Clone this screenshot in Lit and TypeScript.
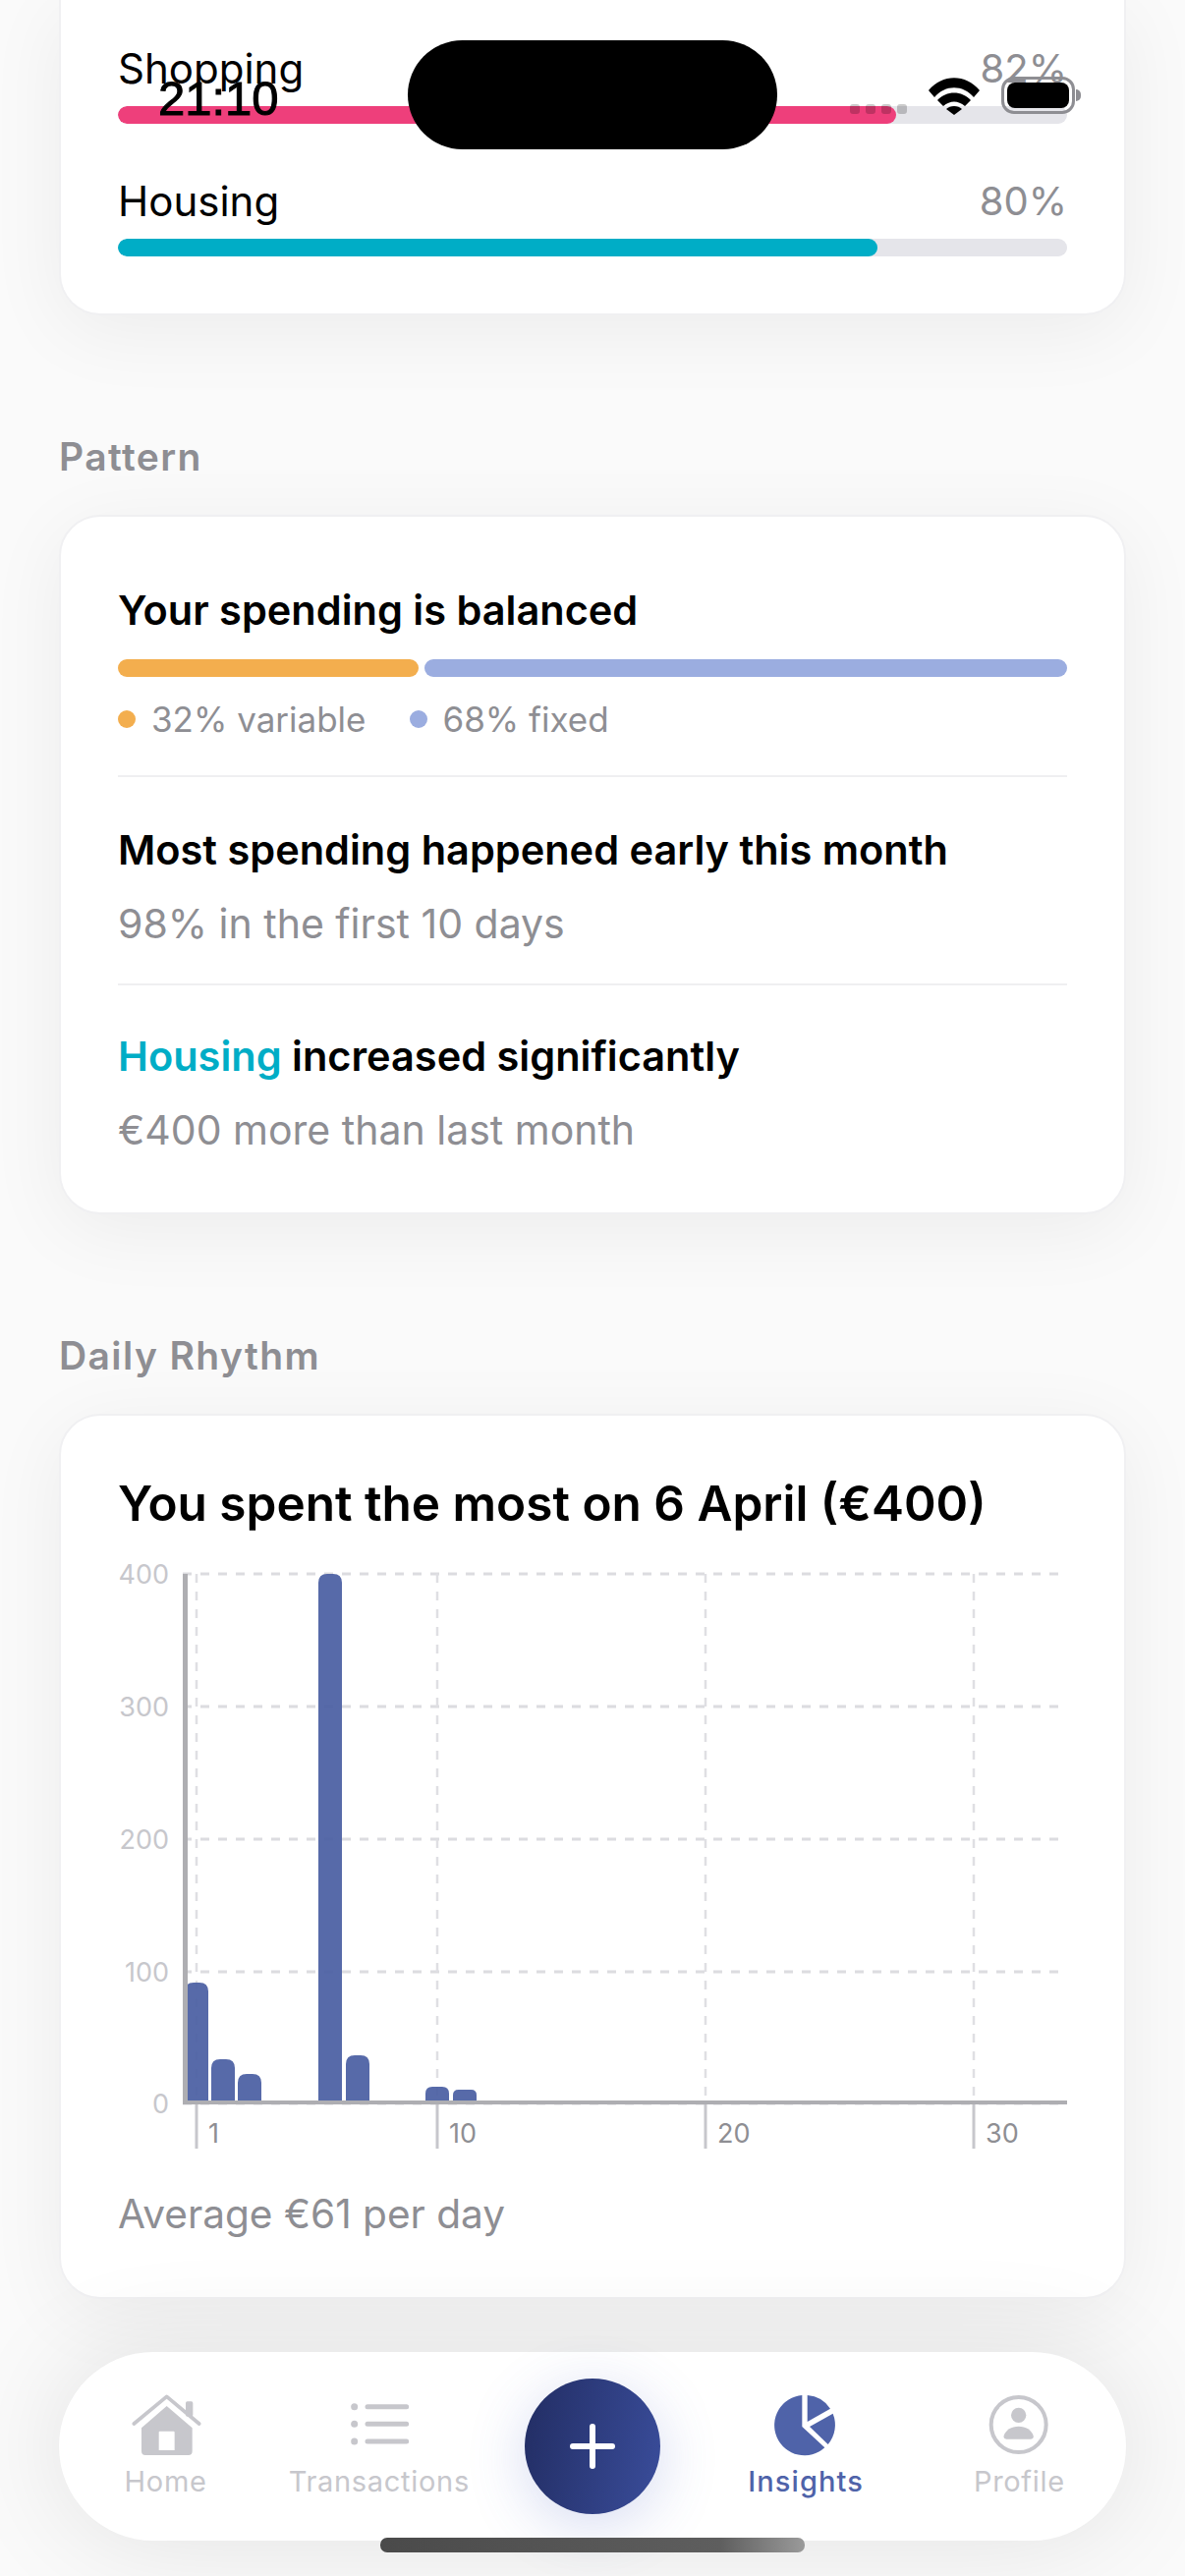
import { LitElement, html, css, svg } from "lit";
import { customElement } from "lit/decorators.js";

const X0 = 186, X1 = 1086, Y0 = 1602, Y1 = 2141;
const ticks = [{ x: 200, t: "1" }, { x: 445, t: "10" }, { x: 718, t: "20" }, { x: 991, t: "30" }];
const yLabels = [{ y: 1602, t: "400" }, { y: 1737, t: "300" }, { y: 1872, t: "200" }, { y: 2007, t: "100" }, { y: 2141, t: "0" }];
const bars = [
  { x: 188, top: 2018 }, { x: 215, top: 2096 }, { x: 242, top: 2111 }, { x: 324, top: 1602 },
  { x: 352, top: 2092 }, { x: 433, top: 2124 }, { x: 461, top: 2127 },
];
const BASE = 2138;

function barPath(x: number, top: number) {
  const w = 24, r = Math.min(9, (BASE - top) / 2);
  return `M${x} ${BASE}V${top + r}Q${x} ${top} ${x + r} ${top}H${x + w - r}Q${x + w} ${top} ${x + w} ${top + r}V${BASE}Z`;
}

@customElement("app-root")
export class AppRoot extends LitElement {
  static styles = css`
    :host { display: block; position: relative; height: 2622px; overflow: hidden; background: #fafafa; font-family: Inter, "Noto Sans", sans-serif; color: #000; }
    .page { padding: 0 60px; display: flex; flex-direction: column; }
    .card { background: #fff; border: 2px solid #f0f0f2; border-radius: 42px; padding: 0 58px; box-shadow: 0 16px 80px rgba(0,0,0,.06); }
    .first { border-top: 0; border-radius: 0 0 42px 42px; padding-top: 45px; padding-bottom: 58px; }
    .row { display: flex; justify-content: space-between; font-size: 42px; line-height: 50px; }
    .pct { color: #8e8e93; font-size: 40px; }
    .track { height: 18px; margin-top: 13px; background: #e5e5ea; border-radius: 9px; overflow: hidden; }
    .fill { height: 100%; border-radius: 9px; }
    .gap { height: 54px; }
    .label { margin: 119px 0 34px; font-size: 39px; line-height: 50px; font-weight: 600; color: #8e8e93; letter-spacing: 1.4px; }
    .pattern { padding-top: 70px; padding-bottom: 59px; }
    .title { font-size: 41.5px; line-height: 50px; font-weight: 600; }
    .split { display: flex; gap: 6px; margin-top: 25px; }
    .seg { height: 18px; border-radius: 9px; }
    .legend { display: flex; gap: 44px; margin-top: 23px; font-size: 35px; line-height: 40px; color: #8e8e93; }
    .leg { display: flex; align-items: center; gap: 16px; }
    .dot { width: 18px; height: 18px; border-radius: 50%; }
    .div { height: 2px; background: #efeff1; }
    .d1 { margin-top: 37px; }
    .d2 { margin-top: 36px; }
    .t2 { margin-top: 49px; }
    .t3 { margin-top: 47px; }
    .sub { font-size: 41px; line-height: 50px; color: #8e8e93; margin-top: 25px; }
    .teal { color: #00adc6; }
    .rhythm { padding-top: 59px; padding-bottom: 59px; }
    .big { font-size: 49.5px; line-height: 60px; font-weight: 600; }
    .chart { display: block; width: 966px; height: 600px; margin-top: 30px; }
    .avg { font-size: 40.6px; line-height: 50px; color: #8e8e93; margin-top: 39px; }
    .ylab { font-size: 27px; fill: #c7c7cc; font-family: Inter, sans-serif; }
    .xlab { font-size: 27px; fill: #8e8e93; font-family: Inter, sans-serif; }

    .status { position: absolute; inset: 0 0 auto 0; height: 160px; pointer-events: none; }
    .time { position: absolute; left: 161px; top: 72px; font-family: "Liberation Sans", sans-serif; font-size: 49px; line-height: 56px; -webkit-text-stroke: 1px #000; }
    .island { position: absolute; left: 415px; top: 41px; width: 376px; height: 111px; border-radius: 56px; background: #000; }
    .sdots { position: absolute; left: 865px; top: 106px; display: flex; gap: 6px; }
    .sdots i { display: block; width: 10px; height: 10px; border-radius: 3px; background: rgba(0,0,0,.2); }
    .wifi { position: absolute; left: 945px; top: 79px; width: 52px; height: 38px; }
    .batt { position: absolute; left: 1019px; top: 78px; width: 75px; height: 38px; box-sizing: border-box; border: 3px solid #8e8e93; border-radius: 13px; padding: 3px; }
    .batt b { display: block; height: 100%; background: #000; border-radius: 8px; }
    .cap { position: absolute; left: 1095px; top: 91px; width: 5px; height: 12px; background: #8e8e93; border-radius: 0 6px 6px 0; }

    .nav { position: absolute; left: 60px; top: 2394px; width: 1086px; height: 192px; border-radius: 96px; background: #fff; box-shadow: 0 0 110px rgba(0,0,0,.1); display: grid; grid-template-columns: repeat(5, 1fr); }
    .item { display: flex; flex-direction: column; align-items: center; padding-top: 42px; color: #c7c7cc; font-size: 29px; line-height: 40px; letter-spacing: .7px; }
    .item svg { display: block; width: 72px; height: 64px; margin-bottom: 6px; fill: currentColor; }
    .active { color: #4f63a9; font-weight: 500; letter-spacing: 1.1px; }
    .fabcell { display: flex; align-items: center; justify-content: center; }
    .fab { width: 138px; height: 138px; border-radius: 50%; background: linear-gradient(100deg, #222d63, #3a4d9b); box-shadow: 0 12px 60px rgba(70,90,190,.22); display: flex; align-items: center; justify-content: center; }
    .fab svg { width: 46px; height: 46px; }
    .home { position: absolute; left: 387px; top: 2583px; width: 432px; height: 15px; border-radius: 7px; background: linear-gradient(90deg, #4a4a4a, #5e5e5e 80%, #9a9a9a); }
  `;

  private chart() {
    return html`<svg class="chart" viewBox="120 1590 966 600">
      ${yLabels.map((l) => svg`<line x1=${X0} x2=${X1} y1=${l.y} y2=${l.y} stroke="#dcdce0" stroke-width="3" stroke-dasharray="9 9"/>`)}
      ${ticks.map((t) => svg`<line x1=${t.x} x2=${t.x} y1=${Y0} y2=${Y1} stroke="#dfdfe3" stroke-width="2.5" stroke-dasharray="9 9"/>`)}
      ${bars.map((b) => svg`<path d=${barPath(b.x, b.top)} fill="#4a5fa3" fill-opacity=".93"/>`)}
      <rect x="186" y="1602" width="5" height="540" fill="#aeaeb2"/>
      <rect x="186" y="2138" width="900" height="4" fill="#aeaeb2"/>
      ${ticks.map((t) => svg`<rect x=${t.x - 1.5} y="2142" width="3" height="45" fill="#c7c7cc"/>`)}
      ${yLabels.map((l) => svg`<text class="ylab" x="172" y=${l.y + 10} text-anchor="end">${l.t}</text>`)}
      ${ticks.map((t) => svg`<text class="xlab" x=${t.x + 12} y="2181">${t.t}</text>`)}
    </svg>`;
  }

  render() {
    return html`
      <div class="page">
        <section class="card first">
          <div class="row"><span>Shopping</span><span class="pct">82%</span></div>
          <div class="track"><div class="fill" style="width:82%;background:#ee3f7b"></div></div>
          <div class="gap"></div>
          <div class="row"><span>Housing</span><span class="pct">80%</span></div>
          <div class="track"><div class="fill" style="width:80%;background:#00adc6"></div></div>
        </section>

        <div class="label">Pattern</div>
        <section class="card pattern">
          <div class="title">Your spending is balanced</div>
          <div class="split">
            <div class="seg" style="flex:0 0 306px;background:#f3ae4e"></div>
            <div class="seg" style="flex:1;background:#9bade0"></div>
          </div>
          <div class="legend">
            <span class="leg"><span class="dot" style="background:#f3ae4e"></span>32% variable</span>
            <span class="leg"><span class="dot" style="background:#9bade0"></span>68% fixed</span>
          </div>
          <div class="div d1"></div>
          <div class="title t2">Most spending happened early this month</div>
          <div class="sub">98% in the first 10 days</div>
          <div class="div d2"></div>
          <div class="title t3"><span class="teal">Housing</span> increased significantly</div>
          <div class="sub">€400 more than last month</div>
        </section>

        <div class="label">Daily Rhythm</div>
        <section class="card rhythm">
          <div class="big">You spent the most on 6 April (€400)</div>
          ${this.chart()}
          <div class="avg">Average €61 per day</div>
        </section>
      </div>

      <nav class="nav">
        <div class="item">
          <svg viewBox="97 108 216 192">
            <path d="M107 201L207 118L306 201" fill="none" stroke="currentColor" stroke-width="11" stroke-linecap="round" stroke-linejoin="round"/>
            <rect x="265" y="133" width="22" height="46" rx="5"/>
            <path fill-rule="evenodd" d="M130 214L207 147L285 214V285a12 12 0 0 1-12 12H142a12 12 0 0 1-12-12ZM186 224a3 3 0 0 0-3 3V282H231V227a3 3 0 0 0-3-3Z"/>
          </svg>
          <span>Home</span>
        </div>
        <div class="item">
          <svg viewBox="747 108 216 192">
            <circle cx="779" cy="149" r="10.5"/><circle cx="779" cy="202" r="10.5"/><circle cx="779" cy="255" r="10.5"/>
            <path d="M819 149H938M819 202H938M819 255H938" fill="none" stroke="currentColor" stroke-width="15" stroke-linecap="round"/>
          </svg>
          <span>Transactions</span>
        </div>
        <div class="fabcell">
          <div class="fab">
            <svg viewBox="0 0 46 46"><path d="M23 3V43M3 23H43" fill="none" stroke="#fff" stroke-width="6" stroke-linecap="round"/></svg>
          </div>
        </div>
        <div class="item active">
          <svg viewBox="252 108 216 192">
            <path d="M349 114A92 92 0 1 0 418 274L349 210Z"/>
            <path d="M365 114A92 92 0 0 1 435 155L365 195Z"/>
            <path d="M443 170A92 92 0 0 1 428 264L372 210Z"/>
          </svg>
          <span>Insights</span>
        </div>
        <div class="item">
          <svg viewBox="903 108 216 192">
            <circle cx="1010" cy="204" r="84" fill="none" stroke="currentColor" stroke-width="12"/>
            <circle cx="1010" cy="175" r="23"/>
            <path d="M973 248Q963 248 965 238C970 220 988 209 1010 209C1032 209 1050 220 1055 238Q1057 248 1047 248Z"/>
          </svg>
          <span>Profile</span>
        </div>
      </nav>
      <div class="home"></div>

      <div class="status">
        <span class="time">21:10</span>
        <div class="island"></div>
        <div class="sdots"><i></i><i></i><i></i><i></i></div>
        <svg class="wifi" viewBox="0 0 52 38">
          <path d="M0 13C14 -4 38 -4 52 13L46 20C35 7 17 7 6 20Z"/>
          <path d="M9 23C18 13 34 13 43 23L37 29C30 23 22 23 15 29Z"/>
          <path d="M18 32C22 28 30 28 34 32L26 38Z"/>
        </svg>
        <div class="batt"><b></b></div>
        <div class="cap"></div>
      </div>
    `;
  }
}
